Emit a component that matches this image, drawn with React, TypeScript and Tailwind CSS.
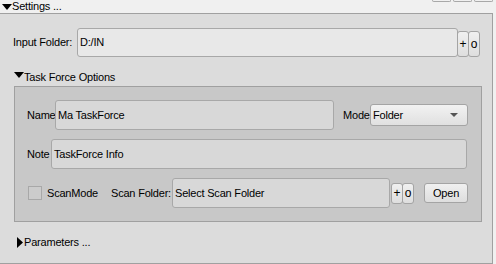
import React from 'react';

const font = { fontFamily: '"Liberation Sans", Arial, sans-serif' };

const DownTri: React.FC<{ className?: string }> = ({ className }) => (
  <svg width="10" height="6" viewBox="0 0 10 6" className={`shrink-0 ${className ?? ''}`}>
    <path d="M0 0 H10 L5 6 Z" fill="#000" />
  </svg>
);

const RightTri: React.FC<{ className?: string }> = ({ className }) => (
  <svg width="6" height="11" viewBox="0 0 6 11" className={`shrink-0 ${className ?? ''}`}>
    <path d="M0 0 L6 5.5 L0 11 Z" fill="#000" />
  </svg>
);

const SmallBtn: React.FC<{ label: string; className?: string }> = ({ label, className }) => (
  <button
    className={`flex shrink-0 items-center justify-center rounded-[3px] border border-[#a4a4a4] bg-gradient-to-b from-[#f0f0f0] to-[#dedede] text-[12px] leading-none text-black ${className ?? ''}`}
  >
    {label}
  </button>
);

const Label: React.FC<{ text: string; className?: string }> = ({ text, className }) => (
  <span className={`shrink-0 whitespace-nowrap ${className ?? ''}`}>{text}</span>
);

const Field: React.FC<{ value: string; className?: string; bg?: string }> = ({ value, className, bg }) => (
  <div
    className={`flex shrink-0 items-center whitespace-nowrap rounded-[3px] border border-[#a8a8a8] pl-[2px] text-black ${bg ?? 'bg-[#d8d8d8]'} ${className ?? ''}`}
  >
    {value}
  </div>
);

export default function App() {
  return (
    <div
      style={font}
      className="relative h-[264px] w-[496px] overflow-hidden bg-[#f0f0f0] text-[11px] tracking-[-0.2px] text-black"
    >
      {/* header */}
      <div className="flex h-[14px] w-[493px] items-start border-b border-[#a0a0a0] bg-[#f0f0f0]">
        <div className="flex items-center">
          <DownTri className="ml-[2px] mt-[1px]" />
          <Label text="Settings ..." className="leading-[13px]" />
        </div>
        <div className="ml-auto flex gap-[2px]">
          <div className="h-[2px] w-[19px] rounded-b-[2px] border-x border-b border-[#a8a8a8]" />
          <div className="h-[2px] w-[19px] rounded-b-[2px] border-x border-b border-[#a8a8a8]" />
          <div className="h-[2px] w-[19px] rounded-b-[2px] border-x border-b border-[#a8a8a8]" />
        </div>
      </div>

      {/* body */}
      <div className="h-[250px] w-[493px] border-r border-b border-[#a0a0a0] bg-[#dcdcdc] pt-[14px]">
        {/* input folder */}
        <div className="flex items-center pl-[13px]">
          <Label text="Input Folder:" className="w-[64px]" />
          <Field value="D:/IN" bg="bg-[#e8e8e8]" className="h-[29px] w-[381px]" />
          <SmallBtn label="+" className="ml-[-1px] mt-[2px] h-[26px] w-[12px]" />
          <SmallBtn label="o" className="ml-[-1px] mt-[2px] h-[26px] w-[12px]" />
        </div>

        {/* task force options */}
        <div className="mt-[13px] flex h-[14px] items-center pl-[14px]">
          <DownTri className="mb-[4px]" />
          <Label text="Task Force Options" className="leading-[13px]" />
        </div>

        <div className="ml-[14px] mt-[2px] w-[468px] border border-[#a0a0a0] bg-[#c8c8c8] pb-[13px] pl-[12px] pr-[14px] pt-[13px]">
          <div className="flex items-center">
            <Label text="Name" className="w-[28px]" />
            <Field value="Ma TaskForce" className="h-[30px] w-[279px]" />
            <Label text="Mode" className="ml-[9px] w-[27px]" />
            <div className="flex h-[22px] w-[98px] shrink-0 items-center justify-between rounded-[3px] border border-[#a4a4a4] bg-gradient-to-b from-[#f2f2f2] to-[#e0e0e0] pl-[2px] pr-[9px]">
              <span>Folder</span>
              <svg width="8" height="4" viewBox="0 0 8 4">
                <path d="M0 0 H8 L4 4 Z" fill="#555" />
              </svg>
            </div>
          </div>

          <div className="mt-[9px] flex items-center">
            <Label text="Note" className="w-[24px]" />
            <Field value="TaskForce Info" className="h-[30px] w-[416px]" />
          </div>

          <div className="mt-[9px] flex items-center">
            <div className="ml-[1px] h-[14px] w-[14px] shrink-0 border border-[#a8a8a8] bg-[#cccccc]" />
            <Label text="ScanMode" className="ml-[5px] w-[64px]" />
            <Label text="Scan Folder:" className="w-[61px]" />
            <Field value="Select Scan Folder" className="h-[30px] w-[218px]" />
            <SmallBtn label="+" className="ml-[1px] h-[21px] w-[12px]" />
            <SmallBtn label="o" className="ml-[-1px] h-[21px] w-[12px]" />
            <button className="ml-[10px] flex h-[20px] w-[44px] shrink-0 items-center justify-center rounded-[3px] border border-[#a4a4a4] bg-gradient-to-b from-[#f0f0f0] to-[#dedede]">
              Open
            </button>
          </div>
        </div>

        {/* parameters */}
        <div className="mt-[13px] flex h-[14px] items-center pl-[17px]">
          <RightTri />
          <Label text="Parameters ..." className="ml-[1px] leading-[13px]" />
        </div>
      </div>
    </div>
  );
}
